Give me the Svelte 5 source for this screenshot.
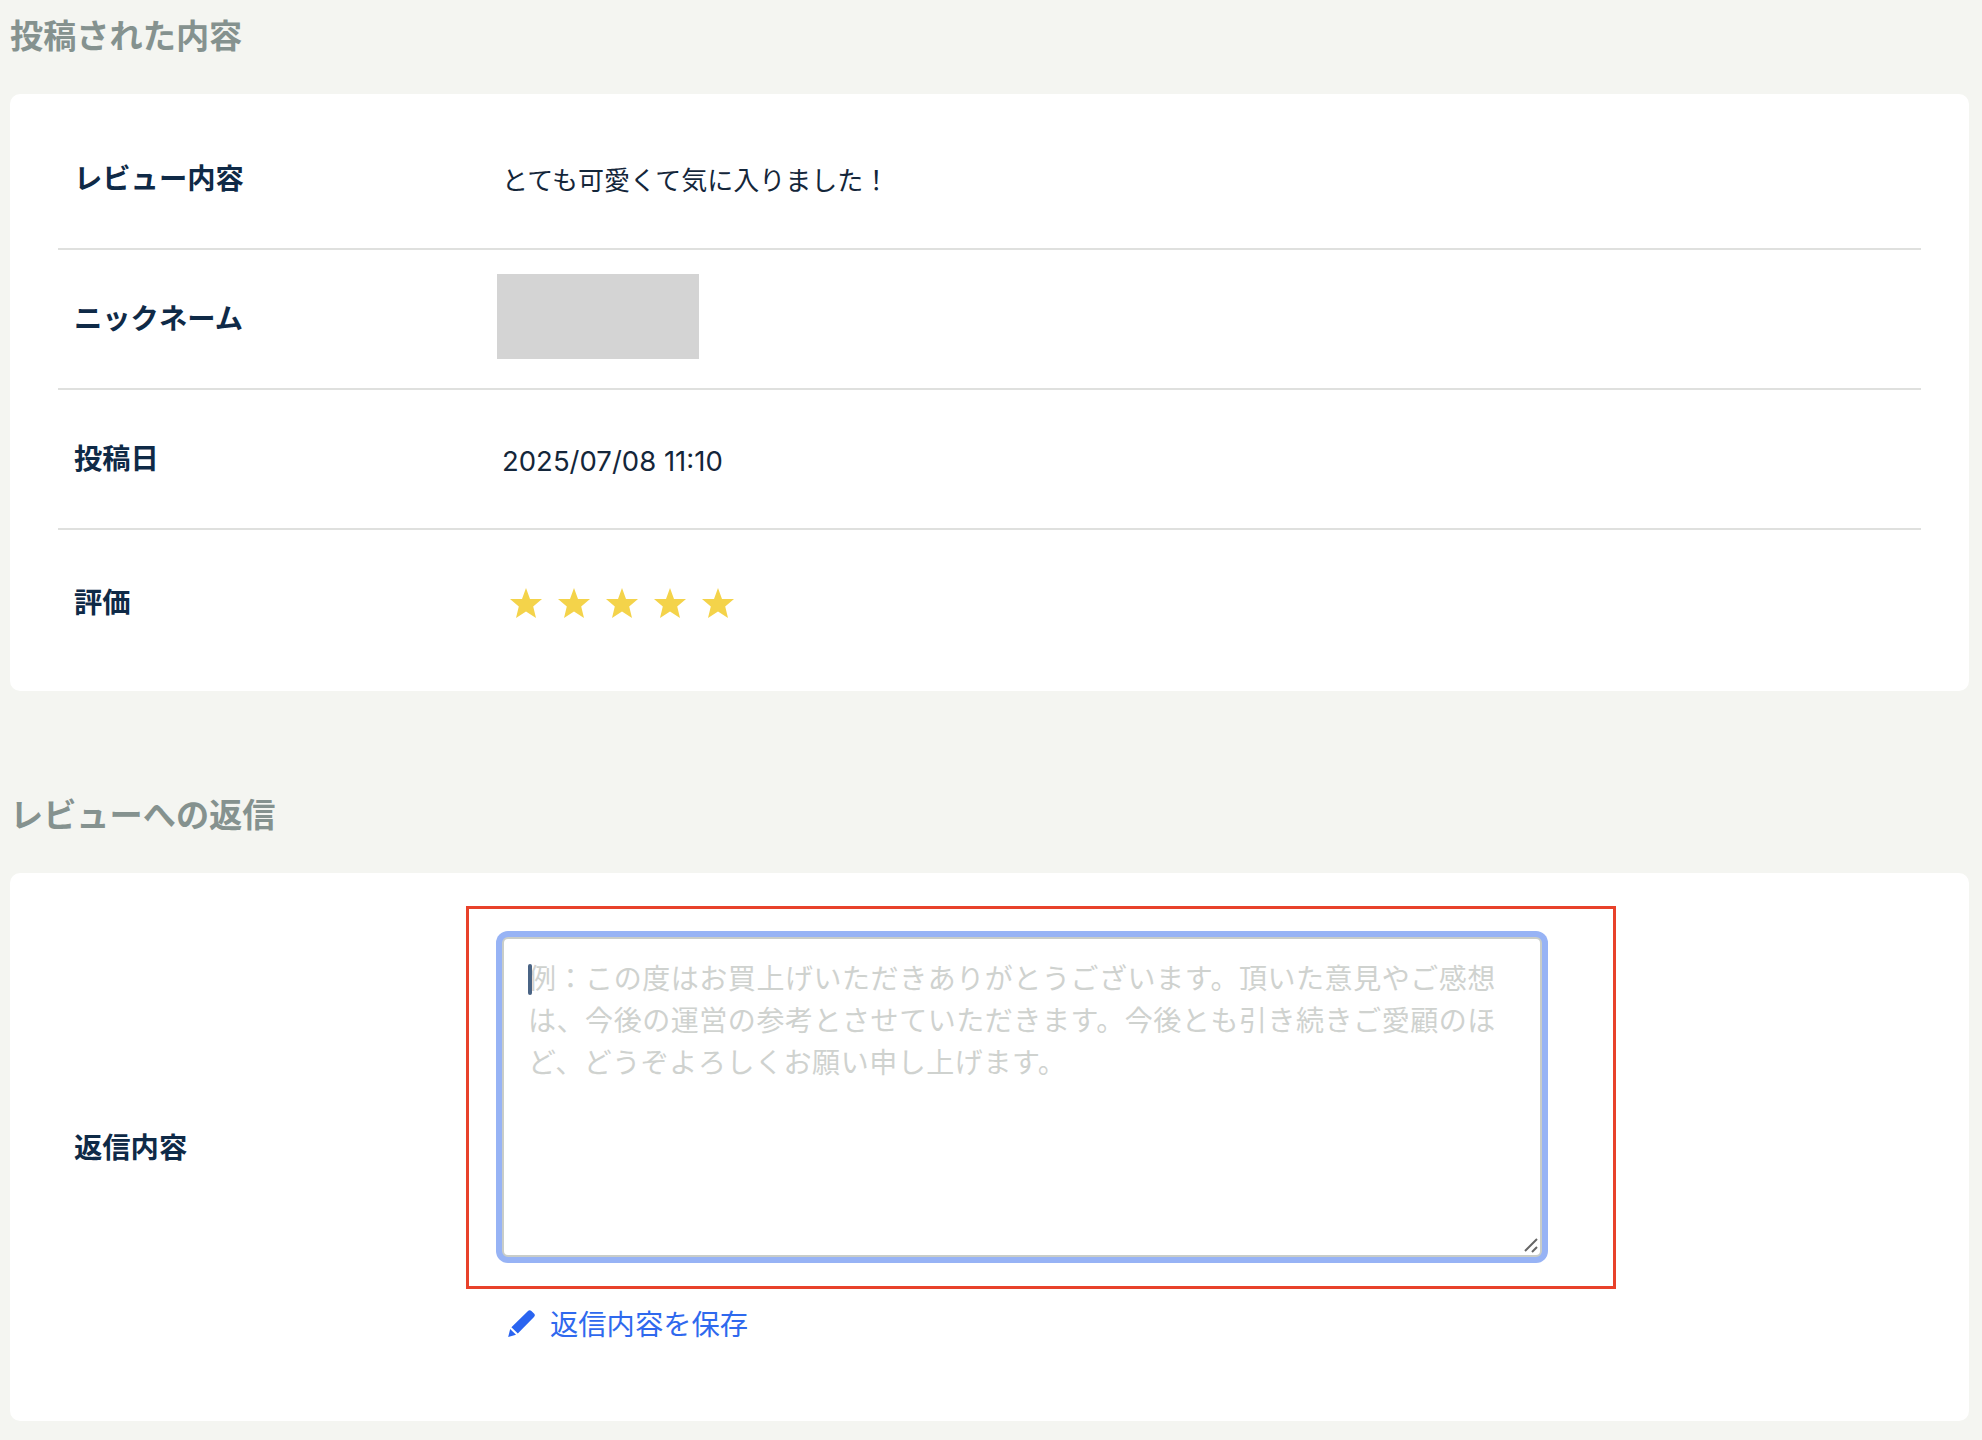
<script>
  const rows = [
    { label: "レビュー内容", value: "とても可愛くて気に入りました！" },
    { label: "ニックネーム", masked: true },
    { label: "投稿日", value: "2025/07/08 11:10", date: true },
    { label: "評価", stars: 5 },
  ];
  const placeholder =
    "例：この度はお買上げいただきありがとうございます。頂いた意見やご感想は、今後の運営の参考とさせていただきます。今後とも引き続きご愛顧のほど、どうぞよろしくお願い申し上げます。";
</script>

<div class="page">
  <h2>投稿された内容</h2>
  <section class="card info">
    {#each rows as row}
      <div class="row">
        <div class="label">{row.label}</div>
        <div class="value" class:date={row.date}>
          {#if row.masked}
            <div class="mask"></div>
          {:else if row.stars}
            <div class="stars">
              {#each Array(row.stars) as _}
                <svg viewBox="0 0 32 30" width="32" height="30"><path d="M16 0l4 11H32l-8.8 7.6L26 30l-10-6.6L6 30l2.8-11.4L0 11h12z" /></svg>
              {/each}
            </div>
          {:else}
            {row.value}
          {/if}
        </div>
      </div>
    {/each}
  </section>

  <h2 class="second">レビューへの返信</h2>
  <section class="card reply">
    <div class="label">返信内容</div>
    <div class="field">
      <div class="highlight">
        <div class="input-wrap">
          <textarea {placeholder}></textarea>
          <span class="caret"></span>
          <svg class="grip" viewBox="0 0 14 15" width="14" height="15">
            <path d="M1 13L13 1M8 14l5-5" />
          </svg>
        </div>
      </div>
      <a class="save" href="#save">
        <svg viewBox="0 0 27 27" width="27" height="27">
          <path d="M20 1a2.4 2.4 0 0 1 3.4 0l2.6 2.6a2.4 2.4 0 0 1 0 3.4L9.8 23.4 3.4 17.2z" />
          <path d="M2.2 19l5.8 5.8L0.2 27z" />
        </svg>
        返信内容を保存
      </a>
    </div>
  </section>
</div>

<style>
  :global(body) {
    background: #f4f5f1;
  }
  .page {
    box-sizing: border-box;
    min-height: 100vh;
    padding: 12px 13px 19px 10px;
    font-family: Inter, "Noto Sans CJK JP", sans-serif;
    color: #14263a;
  }
  h2 {
    margin: 0 0 38px;
    font-size: 33.2px;
    line-height: 44px;
    font-weight: 700;
    color: #85928f;
    font-family: "Noto Sans CJK JP", sans-serif;
  }
  h2.second {
    margin: 100px 0 38px 0;
  }
  .card {
    background: #fff;
    border-radius: 10px;
  }
  .info {
    padding: 16px 48px 21px;
  }
  .row {
    display: grid;
    grid-template-columns: 439px 1fr;
    align-items: center;
    height: 140px;
    border-bottom: 2px solid #dfe0de;
    box-sizing: border-box;
  }
  .row:last-child {
    border-bottom: none;
  }
  .label {
    padding-left: 16px;
    font-size: 28.3px;
    font-weight: 700;
    color: #0f2a47;
    font-family: "Noto Sans CJK JP", sans-serif;
  }
  .row .label {
    margin-bottom: 5px;
  }
  .row:last-child .label {
    margin-bottom: 0;
  }
  .value {
    padding-left: 5px;
    margin-bottom: 2px;
    font-size: 26px;
  }
  .value.date {
    margin: 3px 0 0;
    padding-left: 5px;
    font-size: 27.5px;
  }
  .mask {
    width: 202px;
    height: 85px;
    margin: 0 0 4px -5px;
    background: #d4d4d4;
  }
  .stars {
    display: flex;
    gap: 16px;
    padding: 8px 0 0 8px;
  }
  .stars svg {
    fill: #f4d34a;
    display: block;
  }
  .reply {
    display: grid;
    grid-template-columns: 408px 1150px;
    align-items: center;
    padding: 33px 48px 37px;
  }
  .field {
    display: flex;
    flex-direction: column;
    align-items: flex-start;
  }
  .highlight {
    box-sizing: border-box;
    width: 100%;
    height: 383px;
    padding: 28px 71px 29px 33px;
    border: 3px solid #e8412a;
  }
  .input-wrap {
    position: relative;
    height: 320px;
  }
  textarea {
    display: block;
    box-sizing: border-box;
    width: 100%;
    height: 100%;
    padding: 17px 24px;
    border: 2px solid #c9cdc8;
    border-radius: 6px;
    box-shadow: 0 0 0 6px #97b3f5;
    outline: none;
    resize: none;
    font-family: "Noto Sans CJK JP", sans-serif;
    font-size: 28px;
    letter-spacing: 0.55px;
    line-height: 42px;
  }
  textarea::placeholder {
    color: #cfd2cf;
    opacity: 1;
  }
  .caret {
    position: absolute;
    left: 26px;
    top: 27px;
    width: 4px;
    height: 31px;
    border-radius: 2px;
    background: #4a6485;
  }
  .grip {
    position: absolute;
    right: 4px;
    bottom: 4px;
    fill: none;
    stroke: #666;
    stroke-width: 2;
  }
  .save {
    display: flex;
    align-items: center;
    gap: 15px;
    margin: 17px 0 44px 42px;
    font-family: "Noto Sans CJK JP", sans-serif;
    font-size: 28.3px;
    line-height: 34px;
    color: #2f69ee;
    text-decoration: none;
  }
  .save svg {
    fill: #2a64f0;
    display: block;
  }
</style>
